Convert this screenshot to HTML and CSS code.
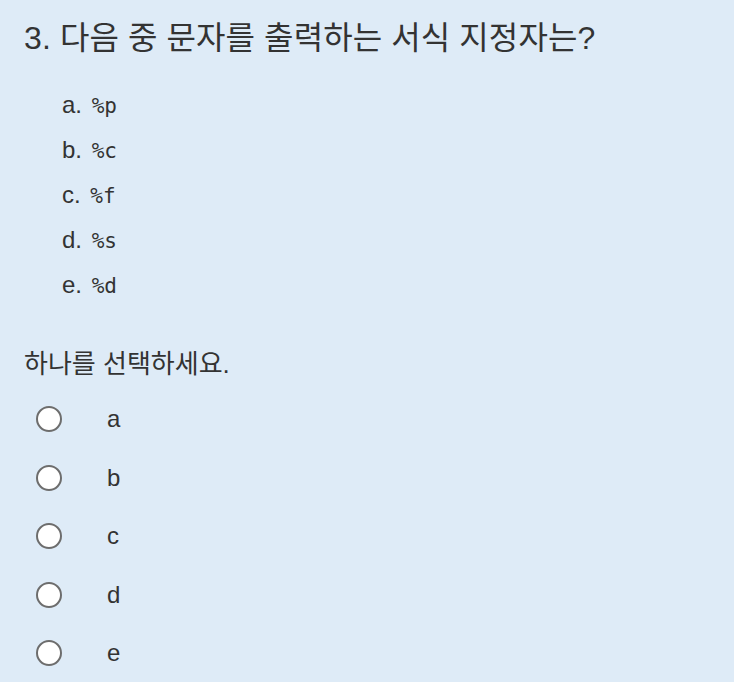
FILE: index.html
```html
<!DOCTYPE html>
<html lang="ko">
<head>
  <meta charset="UTF-8">
  <meta name="viewport" content="width=device-width, initial-scale=1.0">
  <title>문제 3</title>
  <link rel="stylesheet" href="styles.css">
</head>
<body>
  <div class="question">
    <h2 class="qtext">3. 다음 중 문자를 출력하는 서식 지정자는?</h2>

    <ol class="choices">
      <li><span class="mark">a.</span> <code>%p</code></li>
      <li><span class="mark">b.</span> <code>%c</code></li>
      <li><span class="mark">c.</span> <code>%f</code></li>
      <li><span class="mark">d.</span> <code>%s</code></li>
      <li><span class="mark">e.</span> <code>%d</code></li>
    </ol>

    <p class="prompt">하나를 선택하세요.</p>

    <div class="answer">
      <label class="option"><input type="radio" name="q3"><span>a</span></label>
      <label class="option"><input type="radio" name="q3"><span>b</span></label>
      <label class="option"><input type="radio" name="q3"><span>c</span></label>
      <label class="option"><input type="radio" name="q3"><span>d</span></label>
      <label class="option"><input type="radio" name="q3"><span>e</span></label>
    </div>
  </div>
</body>
</html>
```

FILE: styles.css
```css
body {
  margin: 0;
  background: #deebf7;
  font-family: 'Liberation Sans', 'Noto Sans CJK KR', sans-serif;
  color: #333;
}

.question {
  padding: 16px 24px 0;
}

.qtext {
  margin: 0;
  font-size: 32px;
  font-weight: normal;
  line-height: 44px;
  letter-spacing: 0.1px;
}

.choices {
  list-style: none;
  margin: 23px 0 0;
  padding: 0 0 0 38px;
}

.choices li {
  font-size: 24px;
  line-height: 44px;
}

.choices code {
  margin-left: 3px;
  font-family: 'DejaVu Sans Mono', monospace;
  font-size: 21px;
}

.prompt {
  margin: 36px 0 0;
  font-size: 26px;
  line-height: 40px;
}

.answer {
  display: flex;
  flex-direction: column;
  margin-top: 6px;
}

.option {
  display: flex;
  align-items: center;
  height: 58.5px;
  font-size: 24px;
}

.option input {
  appearance: none;
  width: 26px;
  height: 26px;
  margin: 0 0 0 12px;
  border: 2px solid #6d6d6d;
  border-radius: 50%;
  background: #fff;
}

.option span {
  margin-left: 45px;
}
```
